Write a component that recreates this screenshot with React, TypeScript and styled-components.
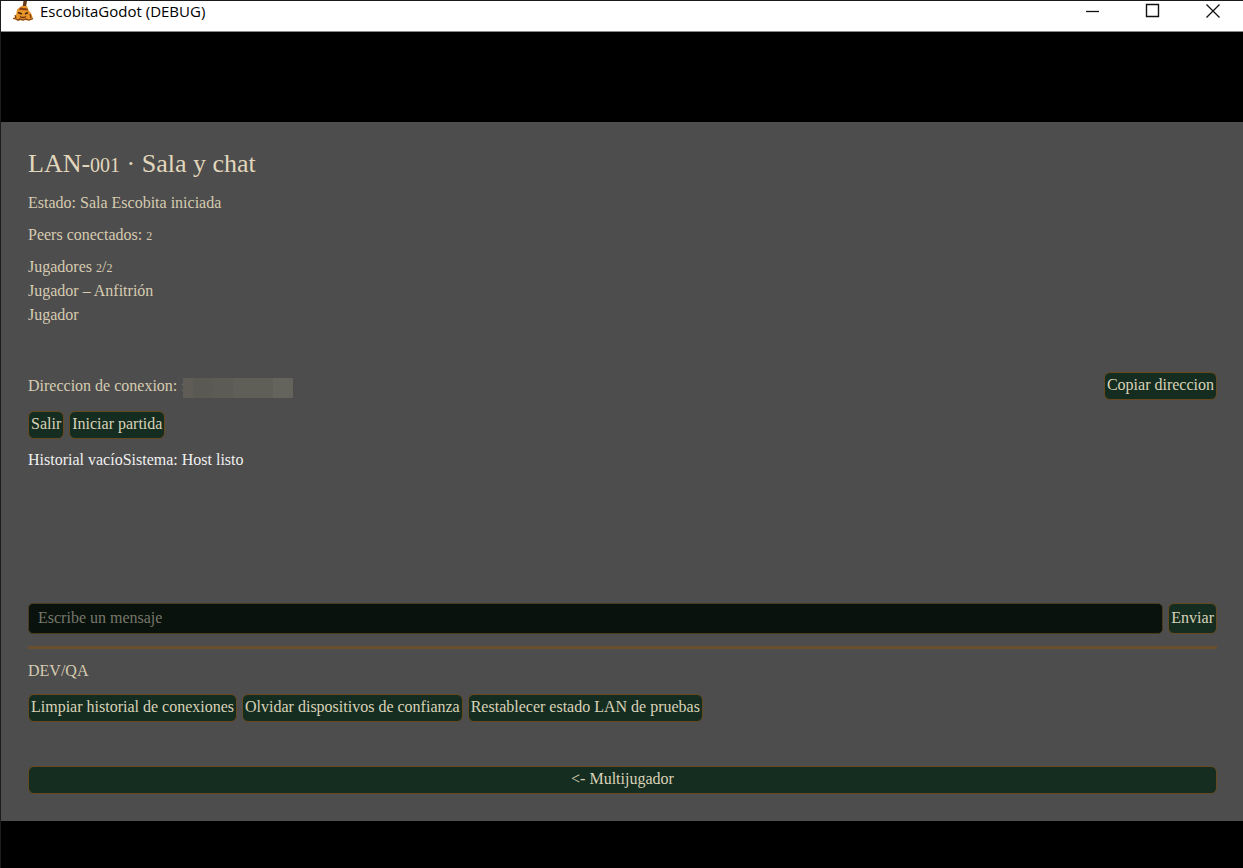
import React from "react";
import styled, { createGlobalStyle } from "styled-components";

const GlobalStyle = createGlobalStyle`
  * { box-sizing: border-box; }
  html, body { margin: 0; background: #000; }
  body, button, input { font-family: "Liberation Serif", "Times New Roman", serif; }
`;

const Window = styled.div`
  min-height: 100vh;
  border-top: 1px solid #1c1a1b;
  border-left: 1px solid #1c1c1c;
  background: #000;
`;

const TitleBar = styled.header`
  display: flex;
  align-items: flex-start;
  height: 31px;
  background: #fff;
  border-bottom: 1px solid #8a8a8a;
`;

const AppIcon = styled.svg`
  width: 22px;
  height: 20px;
  margin-left: 11px;
`;

const Caption = styled.span`
  flex: 1;
  margin-left: 6px;
  font: 15px/20px "Open Sans", "Noto Sans", sans-serif;
  color: #000;
`;

const WindowButtons = styled.div`
  display: flex;
`;

const WindowButton = styled.button`
  display: flex;
  justify-content: center;
  width: 60px;
  height: 22px;
  padding: 2px 0 0;
  border: 0;
  background: none;
`;

const Panel = styled.main`
  display: flex;
  flex-direction: column;
  margin: 90px 0 46px;
  padding: 26px 26px 27px 27px;
  background: #4d4d4d;
  color: #e2d7bc;
`;

const Title = styled.h1`
  margin: 0 0 11px;
  font-size: 26px;
  line-height: 32px;
  font-weight: 400;
`;

const OldStyle = styled.span<{ $large?: boolean }>`
  font-size: ${(p) => (p.$large ? 20 : 12)}px;
  line-height: 1;
`;

const Line = styled.p<{ $light?: boolean }>`
  margin: 0;
  font-size: 16px;
  line-height: 24px;
  color: ${(p) => (p.$light ? "#f0f0f0" : "#d6cbb1")};
`;

const Status = styled.section`
  display: flex;
  flex-direction: column;
  gap: 8px;
  min-height: 181px;
`;

const Row = styled.div<{ $spread?: boolean }>`
  display: flex;
  flex-wrap: wrap;
  align-items: center;
  gap: 5px;
  justify-content: ${(p) => (p.$spread ? "space-between" : "flex-start")};
`;

const Address = styled.div`
  display: flex;
  align-items: center;
`;

const Redacted = styled.span`
  display: flex;
  height: 20px;
  margin: 4px 0 0 -4px;
`;

const Tile = styled.span<{ $tone: string; $w: number }>`
  width: ${(p) => p.$w}px;
  background: ${(p) => p.$tone};
`;

const Button = styled.button`
  height: 28px;
  padding: 0 2px 2px;
  border: 1px solid #67491f;
  border-radius: 6px;
  background: #152d21;
  color: #d9d2b8;
  font-size: 16px;
  line-height: 24px;
  white-space: nowrap;
`;

const Stack = styled.div`
  display: flex;
  flex-direction: column;
  gap: 11px;
`;

const Chat = styled.section`
  min-height: 164px;
  padding-top: 9px;
`;

const MessageForm = styled.form`
  display: flex;
  gap: 5px;

  ${Button} { height: 31px; }
`;

const MessageInput = styled.input`
  flex: 1;
  min-width: 0;
  height: 31px;
  padding: 0 9px 2px;
  border: 1px solid #4c3a1c;
  border-radius: 5px;
  background: #09120d;
  color: #d6cfb3;
  font-size: 16px;

  &::placeholder { color: #77786a; opacity: 1; }
`;

const Divider = styled.hr`
  width: 100%;
  height: 3px;
  margin: 12px 0 10px;
  border: 0;
  background: #6b4e2e;
`;

const Footer = styled.footer`
  display: flex;
  flex-direction: column;
  margin-top: 44px;
`;

const tiles: [string, number][] = [
  ["#5e5c55", 10],
  ["#5a5954", 20],
  ["#5d5b55", 20],
  ["#5f5e57", 40],
  ["#64635c", 20],
];

export default function App() {
  return (
    <>
      <GlobalStyle />
      <Window>
        <TitleBar>
          <AppIcon viewBox="0 0 22 20" aria-hidden="true">
            <path d="M11.5 0h3.5l-1 6h-3.5z" fill="#6b3a18" />
            <path d="M9.5 5h5.5l1.5 4 3 4 1.5 5-4 1.5-5-.5-5 .5-6-2 3-3 1-6z" fill="#e8952a" />
            <path d="M8 6.5l7.5 1 .5 2-9-.8z" fill="#8c3f14" />
            <path d="M6 11.5l4 1.5M13 13l3-1.5" stroke="#4a2410" strokeWidth="1.5" fill="none" />
            <path d="M8 15.5q3 2 6 0" stroke="#6a2c10" strokeWidth="1.4" fill="none" />
            <path d="M1 17.5l3 .5 2 1.2 2-1.2 3 1 3-1 3 1.2 4-1.7M3 14l1 3M18 13l1 4" stroke="#7a3d14" strokeWidth="1.2" fill="none" />
          </AppIcon>
          <Caption>EscobitaGodot (DEBUG)</Caption>
          <WindowButtons>
            <WindowButton aria-label="Minimizar">
              <svg width="16" height="16"><path d="M1 8.5h13" stroke="#111" strokeWidth="1.3" /></svg>
            </WindowButton>
            <WindowButton aria-label="Maximizar">
              <svg width="16" height="16"><path d="M1.5 1.5h12v12h-12z" stroke="#111" strokeWidth="1.4" fill="none" /></svg>
            </WindowButton>
            <WindowButton aria-label="Cerrar">
              <svg width="16" height="16"><path d="M1.5 1.5l13 13M14.5 1.5l-13 13" stroke="#111" strokeWidth="1.3" /></svg>
            </WindowButton>
          </WindowButtons>
        </TitleBar>
        <Panel>
          <Title>LAN-<OldStyle $large>001</OldStyle> · Sala y chat</Title>
          <Status>
            <Line>Estado: Sala Escobita iniciada</Line>
            <Line>Peers conectados: <OldStyle>2</OldStyle></Line>
            <div>
              <Line>Jugadores <OldStyle>2</OldStyle>/<OldStyle>2</OldStyle></Line>
              <Line>Jugador – Anfitrión</Line>
              <Line>Jugador</Line>
            </div>
          </Status>
          <Stack>
            <Row $spread>
              <Address>
                <Line>Direccion de conexion: <OldStyle>1</OldStyle></Line>
                <Redacted aria-hidden="true">
                  {tiles.map(([tone, w], i) => <Tile key={i} $tone={tone} $w={w} />)}
                </Redacted>
              </Address>
              <Button>Copiar direccion</Button>
            </Row>
            <Row>
              <Button>Salir</Button>
              <Button>Iniciar partida</Button>
            </Row>
          </Stack>
          <Chat>
            <Line $light>Historial vacíoSistema: Host listo</Line>
          </Chat>
          <MessageForm onSubmit={(e) => e.preventDefault()}>
            <MessageInput aria-label="Mensaje" placeholder="Escribe un mensaje" />
            <Button>Enviar</Button>
          </MessageForm>
          <Divider />
          <Stack>
            <Line>DEV/QA</Line>
            <Row>
              <Button>Limpiar historial de conexiones</Button>
              <Button>Olvidar dispositivos de confianza</Button>
              <Button>Restablecer estado LAN de pruebas</Button>
            </Row>
          </Stack>
          <Footer>
            <Button>&lt;- Multijugador</Button>
          </Footer>
        </Panel>
      </Window>
    </>
  );
}
